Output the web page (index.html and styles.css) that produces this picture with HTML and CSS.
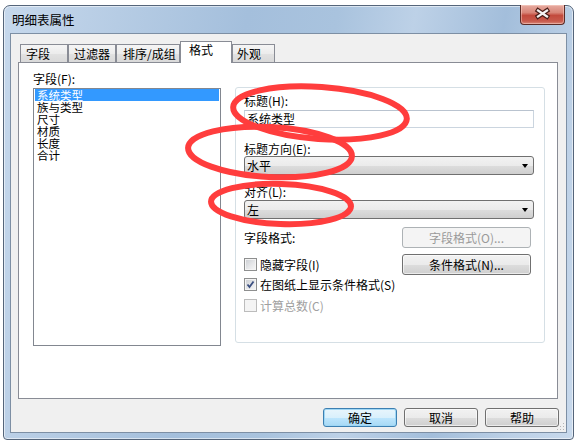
FILE: index.html
```html
<!DOCTYPE html>
<html lang="zh-CN">
  <head>
    <meta charset="UTF-8" />
    <meta name="viewport" content="width=device-width, initial-scale=1.0" />
    <title>明细表属性</title>
    <link rel="stylesheet" href="styles.css">
  </head>
  <body>
    <div class="window">
      <div class="titlebar">
        <span class="title">明细表属性</span>
        <div class="close-btn">
          <svg width="45" height="20" viewBox="0 0 45 20">
            <path d="M18 6.5 L27 12.5 M27 6.5 L18 12.5" stroke="#4a1f1a" stroke-width="4.6" stroke-linecap="square" />
            <path d="M18 6.5 L27 12.5 M27 6.5 L18 12.5" stroke="#f4f4f4" stroke-width="2.2" stroke-linecap="square" />
          </svg>
        </div>
      </div>

      <div class="client">
        <div class="tabs">
          <div class="tab tab-1">字段</div>
          <div class="tab tab-2">过滤器</div>
          <div class="tab tab-3">排序/成组</div>
          <div class="tab tab-4 active">格式</div>
          <div class="tab tab-5">外观</div>
        </div>

        <div class="panel">
          <!-- 左侧字段列表 -->
          <div class="fields">
            <div class="label">字段(F):</div>
            <ul class="listbox">
              <li class="selected">系统类型</li>
              <li>族与类型</li>
              <li>尺寸</li>
              <li>材质</li>
              <li>长度</li>
              <li>合计</li>
            </ul>
          </div>

          <!-- 右侧格式设置 -->
          <div class="group">
            <div class="label label-title">标题(H):</div>
            <div class="edit">系统类型</div>

            <div class="label label-dir">标题方向(E):</div>
            <div class="combo">
              <span>水平</span>
              <span class="arrow"></span>
            </div>

            <div class="label label-align">对齐(L):</div>
            <div class="combo combo-align">
              <span>左</span>
              <span class="arrow"></span>
            </div>

            <div class="row row-format">
              <span>字段格式:</span>
              <div class="btn disabled">字段格式(O)...</div>
            </div>

            <div class="row row-hide">
              <label class="check">
                <span class="box"></span>
                <span>隐藏字段(I)</span>
              </label>
              <div class="btn">条件格式(N)...</div>
            </div>

            <label class="check check-show">
              <span class="box">
                <svg width="11" height="11" viewBox="0 0 11 11">
                  <path d="M2.5 5.5 L4.5 8 L8.5 2.5" fill="none" stroke="#3b4f80" stroke-width="1.8" />
                </svg>
              </span>
              <span>在图纸上显示条件格式(S)</span>
            </label>

            <label class="check check-total disabled">
              <span class="box"></span>
              <span>计算总数(C)</span>
            </label>
          </div>
        </div>

        <div class="footer">
          <div class="btn btn-wide default">确定</div>
          <div class="btn btn-wide">取消</div>
          <div class="btn btn-wide">帮助</div>
        </div>

        <svg class="grip" width="9" height="9" viewBox="0 0 9 9">
          <rect x="7" y="1" width="1" height="1" fill="#b5b5b5" />
          <rect x="4" y="4" width="1" height="1" fill="#b5b5b5" />
          <rect x="7" y="4" width="1" height="1" fill="#b5b5b5" />
          <rect x="1" y="7" width="1" height="1" fill="#b5b5b5" />
          <rect x="4" y="7" width="1" height="1" fill="#b5b5b5" />
          <rect x="7" y="7" width="1" height="1" fill="#b5b5b5" />
        </svg>
      </div>
    </div>

    <!-- 红色标注圈 -->
    <svg class="marks" width="580" height="442" viewBox="0 0 580 442">
      <ellipse cx="320" cy="113" rx="87" ry="26" transform="rotate(4 320 113)" />
      <ellipse cx="270" cy="152" rx="82" ry="25" transform="rotate(3 270 152)" />
      <ellipse cx="281" cy="204" rx="70" ry="20" transform="rotate(2 281 204)" />
    </svg>
  </body>
</html>
```

FILE: styles.css
```css
* {
  box-sizing: border-box;
}
html,
body {
  margin: 0;
  padding: 0;
  background: #fff;
}
body {
  position: relative;
  width: 580px;
  height: 442px;
  overflow: hidden;
  font-family: "Noto Sans CJK SC", "Noto Sans", sans-serif;
  font-size: 12px;
  color: #000;
}
ul {
  margin: 0;
  padding: 0;
  list-style: none;
}

/* 窗口框架 */
.window {
  display: flex;
  flex-direction: column;
  width: 571px;
  height: 435px;
  margin: 5px 0 0 3px;
  padding: 0 6px 6px 6px;
  border: 1px solid #55657a;
  border-radius: 7px 7px 4px 4px;
  background: linear-gradient(
    100deg,
    #c6d8ec 0%,
    #b6cce4 18%,
    #a4bfdc 38%,
    #a9c3de 52%,
    #bdd1e7 64%,
    #a3bedb 78%,
    #bcd0e6 90%,
    #c8d9ec 100%
  );
  box-shadow: inset 0 0 0 1px rgba(255, 255, 255, 0.55);
}
.titlebar {
  display: flex;
  justify-content: space-between;
  align-items: flex-start;
  height: 27px;
  flex-shrink: 0;
}
.title {
  margin: 6px 0 0 2px;
  font-size: 12.5px;
  line-height: 16px;
}
.close-btn {
  width: 45px;
  height: 20px;
  margin: -1px 2px 0 0;
  border: 1px solid #5b2b26;
  border-top: none;
  border-radius: 0 0 4px 4px;
  background: linear-gradient(#e7aca2 0%, #d88578 40%, #c24a3d 55%, #c85a4c 85%, #d98a7c 100%);
  box-shadow: inset 0 0 0 1px rgba(255, 220, 210, 0.45);
}
.close-btn svg {
  display: block;
  margin: -1px 0 0 -1px;
}

/* 客户区 */
.client {
  position: relative;
  height: 400px;
  padding: 7px 0 0 7px;
  border: 1px solid #7d8fa4;
  background: #f0f0f0;
}

/* 选项卡 */
.tabs {
  display: flex;
  align-items: flex-end;
  height: 21px;
  margin-left: 2px;
}
.tab {
  height: 18px;
  padding: 0 0 0 5px;
  line-height: 17px;
  border: 1px solid #898c95;
  border-bottom: none;
  background: linear-gradient(#f5f5f5 0%, #ececec 50%, #e2e2e2 51%, #d9d9d9 100%);
  white-space: nowrap;
}
.tab-1 {
  width: 48px;
}
.tab-2 {
  width: 48px;
}
.tab-3 {
  width: 64px;
  padding-left: 6px;
}
.tab-4 {
  width: 52px;
}
.tab-5 {
  width: 43px;
  padding-left: 4px;
}
.tab.active {
  position: relative;
  z-index: 1;
  height: 22px;
  margin-bottom: -1px;
  padding-left: 8px;
  line-height: 16px;
  background: #fff;
}

.panel {
  display: flex;
  gap: 14px;
  width: 540px;
  height: 337px;
  padding: 9px 0 0 14px;
  border: 1px solid #898c95;
  background: #fff;
}

.label {
  line-height: 14px;
}

/* 字段列表 */
.fields {
  width: 188px;
}
.fields .label {
  margin-bottom: 2px;
}
.listbox {
  height: 258px;
  padding: 0 1px;
  border: 1px solid #828790;
}
.listbox li {
  height: 12px;
  padding-left: 2px;
  font-size: 11.5px;
  line-height: 12px;
}
.listbox li.selected {
  background: #3399ff;
  color: #fff;
}

/* 右侧分组 */
.group {
  width: 310px;
  height: 256px;
  margin-top: 15px;
  padding-left: 8px;
  border: 1px solid #d5dfe5;
  border-radius: 3px;
}
.label-title {
  margin-top: 6px;
}
.edit {
  width: 290px;
  height: 18px;
  margin-top: 2px;
  padding-left: 2px;
  line-height: 16px;
  border: 1px solid #cbd5df;
  border-top-color: #b9c3cf;
}
.label-dir {
  margin-top: 14px;
}
.label-align {
  margin-top: 10px;
}
.combo {
  display: flex;
  justify-content: space-between;
  align-items: center;
  width: 290px;
  height: 19px;
  padding: 0 5px 0 2px;
  border: 1px solid #707070;
  border-radius: 3px;
  background: linear-gradient(#f2f2f2 0%, #ebebeb 50%, #dddddd 51%, #cfcfcf 100%);
}
.combo-align {
  margin-top: 1px;
}
.arrow {
  width: 0;
  height: 0;
  border-left: 3.5px solid transparent;
  border-right: 3.5px solid transparent;
  border-top: 4px solid #000;
}

.row {
  display: flex;
  justify-content: space-between;
  align-items: center;
  width: 287px;
}
.row-format {
  margin-top: 8px;
}
.row-hide {
  margin-top: 6px;
}

.btn {
  display: flex;
  justify-content: center;
  align-items: center;
  width: 129px;
  height: 21px;
  border: 1px solid #707070;
  border-radius: 3px;
  background: linear-gradient(#f2f2f2 0%, #ebebeb 50%, #dddddd 51%, #cfcfcf 100%);
  box-shadow: inset 0 0 0 1px rgba(255, 255, 255, 0.6);
  white-space: nowrap;
}
.btn.disabled {
  border-color: #adb2b5;
  background: #f4f4f4;
  box-shadow: none;
  color: #9a9a9a;
}

/* 复选框 */
.check {
  display: flex;
  align-items: center;
  gap: 3px;
  height: 14px;
}
.check-show {
  margin-top: 2px;
}
.check-total {
  margin-top: 7px;
}
.box {
  display: flex;
  justify-content: center;
  align-items: center;
  width: 13px;
  height: 13px;
  border: 1px solid #8e8f8f;
  background: linear-gradient(135deg, #c9ccd1 0%, #e6e7e9 55%, #f7f7f7 100%);
  box-shadow: inset 0 0 0 1px #f4f4f4;
}
.check.disabled {
  color: #a0a0a0;
}
.check.disabled .box {
  border-color: #bcbcbc;
  background: #f4f4f4;
}

/* 底部按钮 */
.footer {
  display: flex;
  justify-content: flex-end;
  gap: 7px;
  margin-top: 9px;
  padding-right: 7px;
}
.btn-wide {
  width: 74px;
  height: 19px;
}
.btn.default {
  border-color: #3c7fb1;
  background: linear-gradient(#e8f5fc 0%, #d9f0fc 50%, #bee6fd 51%, #a7d9f5 100%);
  box-shadow: inset 0 0 0 1px #9fd7f5;
}
.grip {
  position: absolute;
  right: 1px;
  bottom: 1px;
}

/* 标注 */
.marks {
  position: absolute;
  left: 0;
  top: 0;
  pointer-events: none;
}
.marks ellipse {
  fill: none;
  stroke: #ff3d3d;
  stroke-width: 6;
}
```
